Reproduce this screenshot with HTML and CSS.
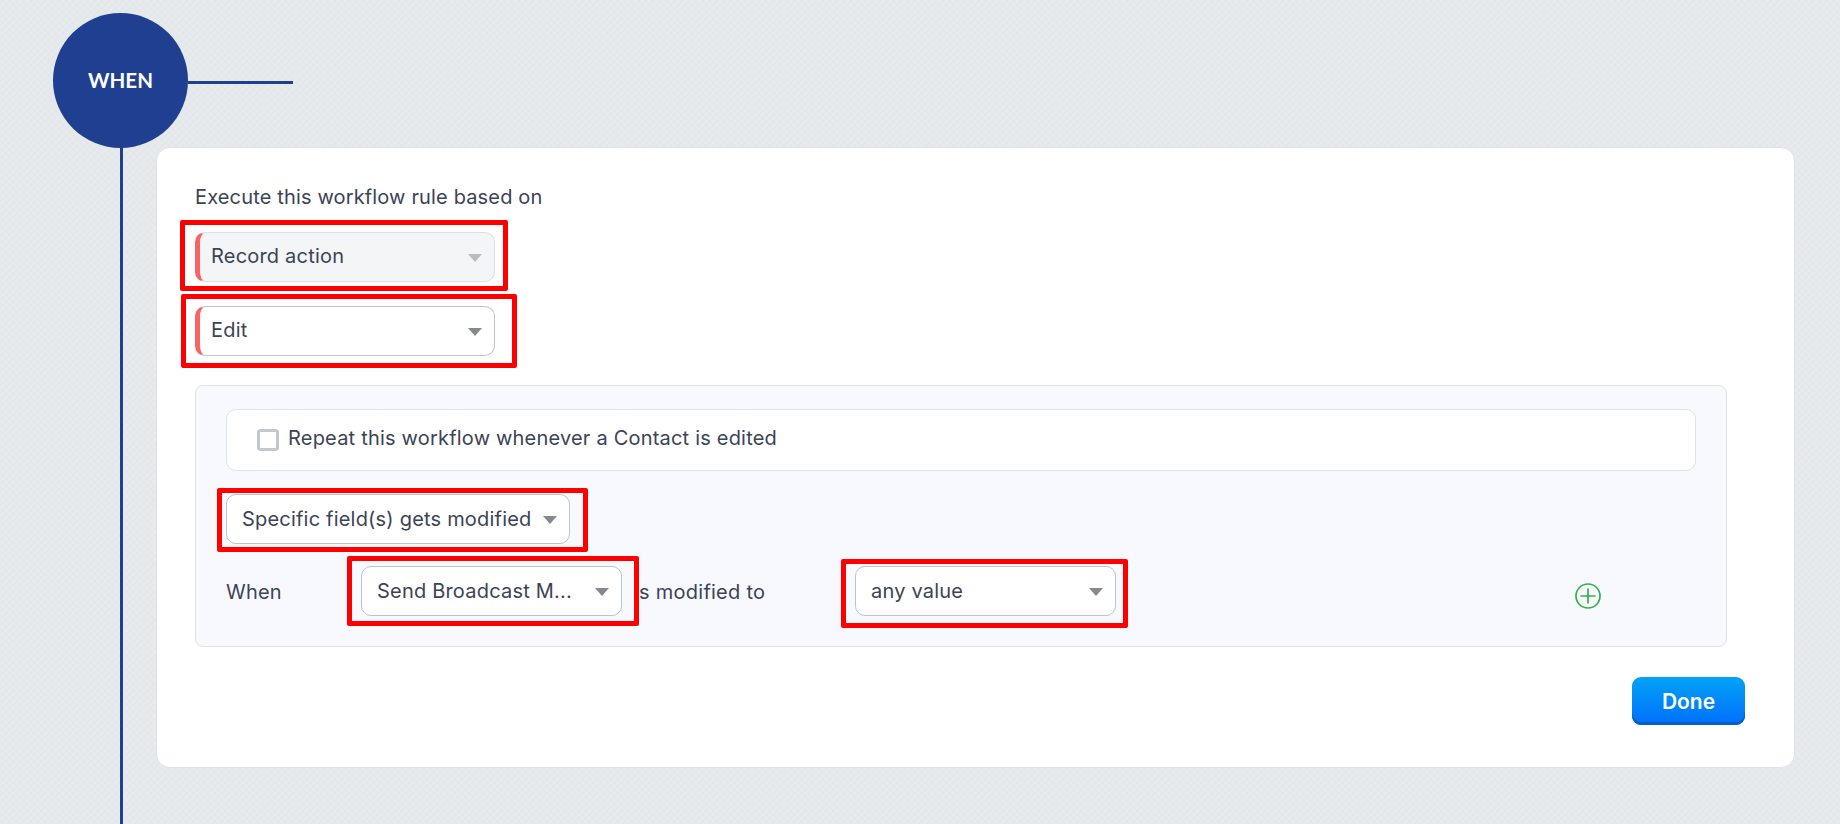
FILE: index.html
```html
<!DOCTYPE html>
<html lang="en">
<head>
<meta charset="utf-8">
<title>Workflow rule</title>
<link rel="stylesheet" href="styles.css">
</head>
<body>
<div class="stage">
  <header class="head">
    <div class="circle">WHEN</div>
    <div class="hline"></div>
  </header>
  <div class="track">
    <div class="rail"></div>
    <main class="card">
      <p class="intro">Execute this workflow rule based on</p>
      <div class="select select-rule select-off has-bar mark mark-a"><span class="value">Record action</span><i class="caret"></i></div>
      <div class="select select-rule has-bar mark mark-b"><span class="value">Edit</span><i class="caret"></i></div>
      <section class="panel">
        <label class="repeat"><span class="check"></span><span class="repeat-text">Repeat this workflow whenever a Contact is edited</span></label>
        <div class="select select-kind mark mark-c"><span class="value">Specific field(s) gets modified</span><i class="caret"></i></div>
        <div class="cond">
          <span class="when">When</span>
          <div class="select select-field mark mark-d"><span class="value">Send Broadcast M...</span><i class="caret"></i></div>
          <span class="mod">is modified to</span>
          <div class="select select-val mark mark-e"><span class="value">any value</span><i class="caret"></i></div>
          <svg class="plus" viewBox="0 0 26 26" width="26" height="26" aria-hidden="true"><circle cx="13" cy="13" r="12" fill="none" stroke="#2fb344" stroke-width="1.7"/><path d="M13 5.5v15M5.5 13h15" fill="none" stroke="#2fb344" stroke-width="1.7"/></svg>
        </div>
      </section>
      <div class="actions"><button class="done" type="button">Done</button></div>
    </main>
  </div>
</div>
</body>
</html>
```
FILE: styles.css
```css
* { box-sizing: border-box; }
html, body { margin: 0; height: 100%; }
body {
  overflow: hidden;
  font-family: "Inter", "Noto Sans", sans-serif;
  color: #3b4356;
  background-color: #e6e9ec;
  background-image:
    repeating-linear-gradient(45deg, rgba(255,255,255,.07) 0 2px, transparent 2px 5px),
    repeating-linear-gradient(-45deg, rgba(120,130,140,.025) 0 2px, transparent 2px 5px);
}
.stage { height: 824px; padding: 13px 45px 0 53px; display: flex; flex-direction: column; }
.head { display: flex; align-items: flex-start; height: 134px; flex: none; position: relative; z-index: 1; }
.circle {
  width: 135px; height: 135px; border-radius: 50%; flex: none;
  background: #1f4091; color: #fff;
  display: flex; align-items: center; justify-content: center;
  font-family: "Lato", sans-serif; font-size: 20.5px; font-weight: 700;
  padding-bottom: 1px;
}
.hline { width: 105px; height: 3px; background: #1f4091; margin-top: 68px; }
.track { flex: 1; display: flex; min-width: 0; }
.rail { width: 103px; flex: none; }
.rail::before { content: ""; display: block; width: 3px; height: 100%; margin-left: 67px; background: #1f4091; }
.card {
  flex: 1; min-width: 0; height: 621px;
  background: #fff; border: 1px solid #dde3ea; border-radius: 14px;
  padding: 37px 48px 0 38px;
}
.intro { margin: 0; font-size: 20px; line-height: 24px; letter-spacing: .15px; }
.select {
  height: 50px; background: #fff; border: 1px solid #bfc3cd; border-radius: 10px;
  display: flex; align-items: center; justify-content: space-between;
  padding: 0 12px 0 15px; font-size: 20px; letter-spacing: .2px; position: relative;
}
.value { white-space: nowrap; padding-bottom: 2px; }
.select-kind .value, .cond .value { padding-bottom: 0; }
.caret { width: 0; height: 0; border: 7px solid transparent; border-top: 8px solid #85888f; border-bottom: 0; margin-top: 2px; flex: none; }
.has-bar { border-left: 5px solid #fb6464; padding-left: 11px; }
.select-rule { width: 300px; }
.select-off { margin-top: 23px; background: #f3f5f7; border-top-color: #dcdfe5; border-right-color: #dcdfe5; border-bottom-color: #dcdfe5; }
.select-off .caret { border-top-color: #b9bcc2; }
.select-off + .select { margin-top: 24px; }
.mark::after { content: ""; position: absolute; border: 5px solid #ff0000; border-radius: 2px; pointer-events: none; }
.mark-a::after { left: -20px; top: -13px; right: -14px; bottom: -10px; }
.mark-b::after { left: -19px; top: -13px; right: -23px; bottom: -13px; }
.mark-c::after { left: -10px; top: -7px; right: -19px; bottom: -9px; }
.mark-d::after { left: -15px; top: -11px; right: -18px; bottom: -11px; }
.mark-e::after { left: -15px; top: -8px; right: -13px; bottom: -13px; }
.panel {
  margin-top: 29px; width: 1532px; height: 262px;
  background: #f8f9fe; border: 1px solid #dde3ea; border-radius: 8px;
  padding: 23px 30px 0 30px;
}
.repeat { display: flex; align-items: center; height: 62px; background: #fff; border: 1px solid #dde3ea; border-radius: 10px; padding-left: 30px; font-size: 20px; letter-spacing: .2px; }
.repeat-text { padding-bottom: 5px; }
.check { width: 22px; height: 22px; border: 3px solid #c3c7ce; border-radius: 4px; background: #fff; margin-right: 9px; flex: none; }
.select-kind { width: 344px; margin-top: 23px; }
.cond { display: flex; align-items: center; margin-top: 22px; font-size: 20px; letter-spacing: .2px; }
.when { width: 135px; flex: none; padding-top: 2px; }
.select-field { width: 261px; flex: none; z-index: 1; }
.mod { width: 233px; flex: none; padding: 2px 0 0 12px; letter-spacing: .25px; }
.select-val { width: 261px; flex: none; }
.plus { margin-left: 459px; flex: none; margin-top: 10px; }
.actions { display: flex; justify-content: flex-end; margin-top: 30px; width: 1550px; }
.done {
  width: 113px; height: 48px; border: 0; border-radius: 9px;
  background: linear-gradient(#02a3f5, #006ffd); box-shadow: inset 0 -3px 0 #0260c9;
  color: #fff; font: 600 21px "Inter", sans-serif;
}
```
